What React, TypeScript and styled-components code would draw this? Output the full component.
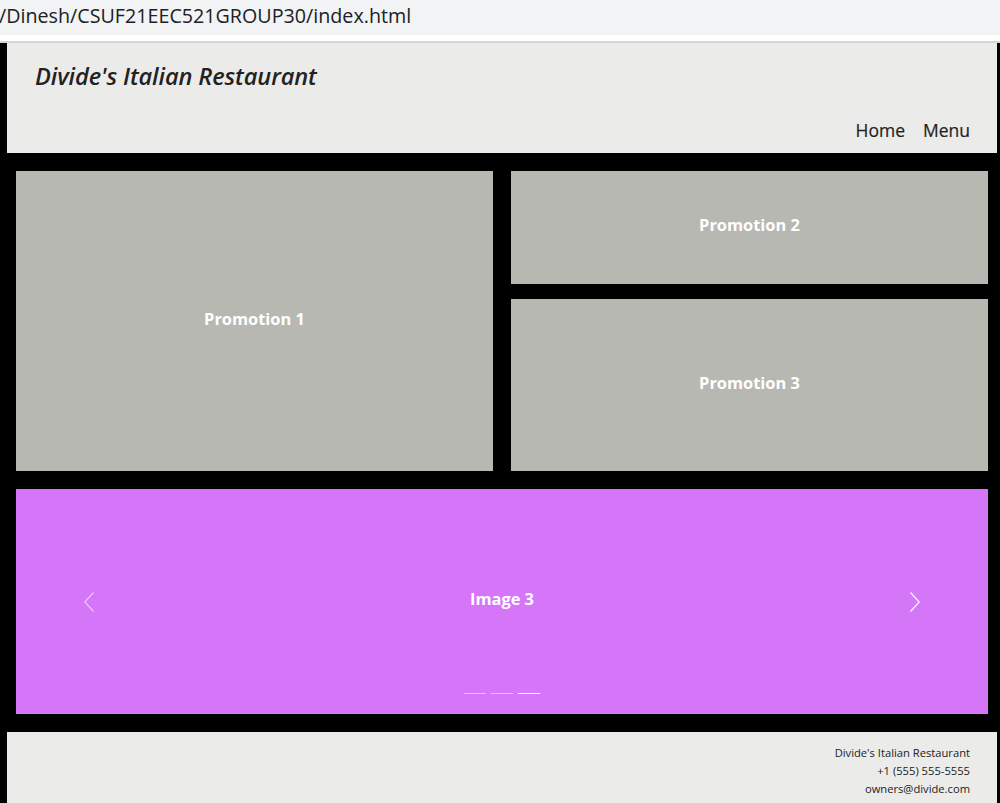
import React from "react";
import styled, { createGlobalStyle } from "styled-components";

const GlobalStyle = createGlobalStyle`
  html, body {
    margin: 0;
    padding: 0;
    background: #000;
    font-family: "Open Sans", "Noto Sans", sans-serif;
  }
  * { box-sizing: border-box; }
`;

const Chrome = styled.div`
  height: 35px;
  background: #f1f3f4;
  display: flex;
  align-items: center;
  overflow: hidden;
`;

const UrlText = styled.span`
  font-family: "Open Sans", sans-serif;
  font-size: 19.7px;
  color: #202124;
  white-space: nowrap;
  margin-top: -4px;
  margin-left: -1px;
`;

const ChromeGap = styled.div`
  height: 6px;
  background: #fff;
`;

const ChromeRule = styled.div`
  height: 2px;
  background: #d6d6d6;
`;

const Page = styled.div`
  background: #000;
  padding: 0 3px 0 7px;
  min-height: 760px;
  display: flex;
  flex-direction: column;
`;

const Header = styled.header`
  background: #ebebe9;
  height: 110px;
  padding: 17px 27px 0 28px;
  display: flex;
  flex-direction: column;
  justify-content: space-between;
`;

const Title = styled.h1`
  margin: 0;
  font-size: 23.6px;
  font-style: italic;
  font-weight: 600;
  color: #222;
  letter-spacing: -0.1px;
`;

const Nav = styled.nav`
  display: flex;
  justify-content: flex-end;
  gap: 18px;
  padding-bottom: 11px;
`;

const NavLink = styled.a`
  font-size: 17.5px;
  font-weight: 500;
  color: #1f1f1f;
  text-decoration: none;
  -webkit-text-stroke: 0.2px #1f1f1f;
`;

const Main = styled.main`
  padding: 18px 9px;
  display: flex;
  flex-direction: column;
  gap: 18px;
`;

const PromoGrid = styled.section`
  display: grid;
  grid-template-columns: 477px 477px;
  grid-template-rows: 113px 172px;
  column-gap: 18px;
  row-gap: 15px;
`;

const Promo = styled.div<{ $span?: boolean }>`
  background: #b8b8b3;
  display: flex;
  align-items: center;
  justify-content: center;
  color: #fff;
  font-size: 16.4px;
  font-weight: 700;
  padding-bottom: 6px;
  grid-row: ${(p) => (p.$span ? "1 / span 2" : "auto")};
`;

const Carousel = styled.section`
  position: relative;
  height: 225px;
  background: #d576f9;
  display: flex;
  align-items: center;
  justify-content: center;
`;

const Slide = styled.div`
  color: #fff;
  font-size: 16.4px;
  font-weight: 700;
  margin-top: -7px;
`;

const Control = styled.button<{ $side: "left" | "right"; $bright?: boolean }>`
  position: absolute;
  top: 103px;
  ${(p) => (p.$side === "left" ? "left: 68px;" : "right: 68px;")}
  width: 10px;
  height: 20px;
  padding: 0;
  border: 0;
  background: transparent;
  opacity: ${(p) => (p.$bright ? 0.95 : 0.55)};
  display: block;
`;

const Indicators = styled.div`
  position: absolute;
  left: 0;
  right: 0;
  top: 204px;
  display: flex;
  justify-content: center;
  gap: 5px;
`;

const Indicator = styled.span<{ $active?: boolean }>`
  display: block;
  width: 22px;
  height: 1px;
  background: #fff;
  opacity: ${(p) => (p.$active ? 1 : 0.5)};
`;

const Footer = styled.footer`
  background: #ebebe9;
  height: 80px;
  padding: 12px 27px 0 0;
  display: flex;
  flex-direction: column;
  align-items: flex-end;
  font-size: 11.2px;
  line-height: 18px;
  color: #222;
`;

const Chevron = ({ dir }: { dir: "left" | "right" }) => (
  <svg width="10" height="20" viewBox="0 0 10 20" fill="none">
    <path
      d={dir === "left" ? "M9.5 0.5 L0.8 10 L9.5 19.5" : "M0.5 0.5 L9.2 10 L0.5 19.5"}
      stroke="#fff"
      strokeWidth="1.3"
    />
  </svg>
);

export default function App() {
  return (
    <>
      <GlobalStyle />
      <Chrome>
        <UrlText>/Dinesh/CSUF21EEC521GROUP30/index.html</UrlText>
      </Chrome>
      <ChromeGap />
      <ChromeRule />
      <Page>
        <Header>
          <Title>Divide's Italian Restaurant</Title>
          <Nav>
            <NavLink href="#">Home</NavLink>
            <NavLink href="#">Menu</NavLink>
          </Nav>
        </Header>
        <Main>
          <PromoGrid>
            <Promo $span>Promotion 1</Promo>
            <Promo>Promotion 2</Promo>
            <Promo>Promotion 3</Promo>
          </PromoGrid>
          <Carousel>
            <Control $side="left" aria-label="Previous">
              <Chevron dir="left" />
            </Control>
            <Slide>Image 3</Slide>
            <Control $side="right" $bright aria-label="Next">
              <Chevron dir="right" />
            </Control>
            <Indicators>
              <Indicator />
              <Indicator />
              <Indicator $active />
            </Indicators>
          </Carousel>
        </Main>
        <Footer>
          <span>Divide's Italian Restaurant</span>
          <span>+1 (555) 555-5555</span>
          <span>owners@divide.com</span>
        </Footer>
      </Page>
    </>
  );
}
